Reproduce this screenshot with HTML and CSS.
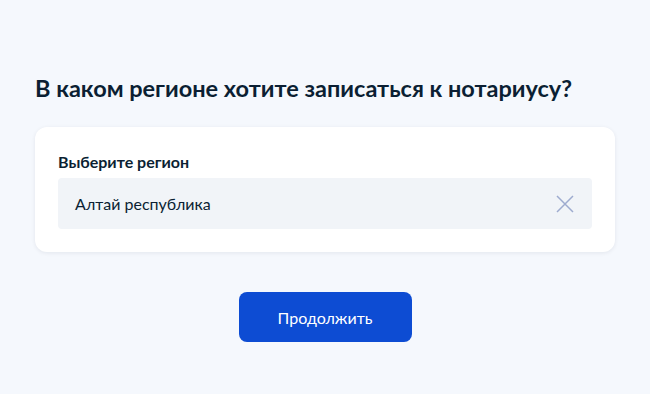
FILE: index.html
```html
<!DOCTYPE html>
<html lang="ru">
<head>
<meta charset="utf-8">
<link rel="stylesheet" href="styles.css">
</head>
<body>
<main class="page">
  <h1 class="title">В каком регионе хотите записаться к нотариусу?</h1>
  <section class="card">
    <div class="label">Выберите регион</div>
    <div class="field">
      <span class="value">Алтай республика</span>
      <svg class="clear" width="18" height="18" viewBox="0 0 18 18" aria-hidden="true">
        <path d="M1 1L17 17M17 1L1 17" stroke="#9eabcf" stroke-width="1.5" fill="none"/>
      </svg>
    </div>
  </section>
  <div class="actions">
    <button class="btn">Продолжить</button>
  </div>
</main>
</body>
</html>
```
FILE: styles.css
```css
* { box-sizing: border-box; }
html, body { margin: 0; padding: 0; }
body {
  background: #f5f8fd;
  font-family: Lato, "Noto Sans", sans-serif;
  color: #0b1f33;
  width: 650px;
  height: 394px;
  overflow: hidden;
}
.page {
  padding: 72px 35px 0 35px;
}
.title {
  margin: 0;
  font-size: 23.5px;
  line-height: 32px;
  font-weight: 700;
  color: #0b1f33;
}
.card {
  margin-top: 23px;
  background: #fff;
  border-radius: 12px;
  box-shadow: 0 1px 4px rgba(11, 31, 51, 0.08);
  padding: 25px 23px 23px 23px;
}
.label {
  font-size: 16px;
  line-height: 20px;
  font-weight: 700;
  margin-bottom: 6px;
}
.field {
  height: 51px;
  background: #f1f4f8;
  border-radius: 4px;
  display: flex;
  align-items: center;
  justify-content: space-between;
  padding: 0 18px 0 17px;
}
.value {
  font-size: 16px;
}
.clear { display: block; }
.actions {
  display: flex;
  justify-content: center;
  margin-top: 40px;
}
.btn {
  width: 173px;
  height: 50px;
  border: 0;
  border-radius: 8px;
  background: #0d4cd3;
  color: #fff;
  font-family: Lato, "Noto Sans", sans-serif;
  font-size: 16px;
}
```
